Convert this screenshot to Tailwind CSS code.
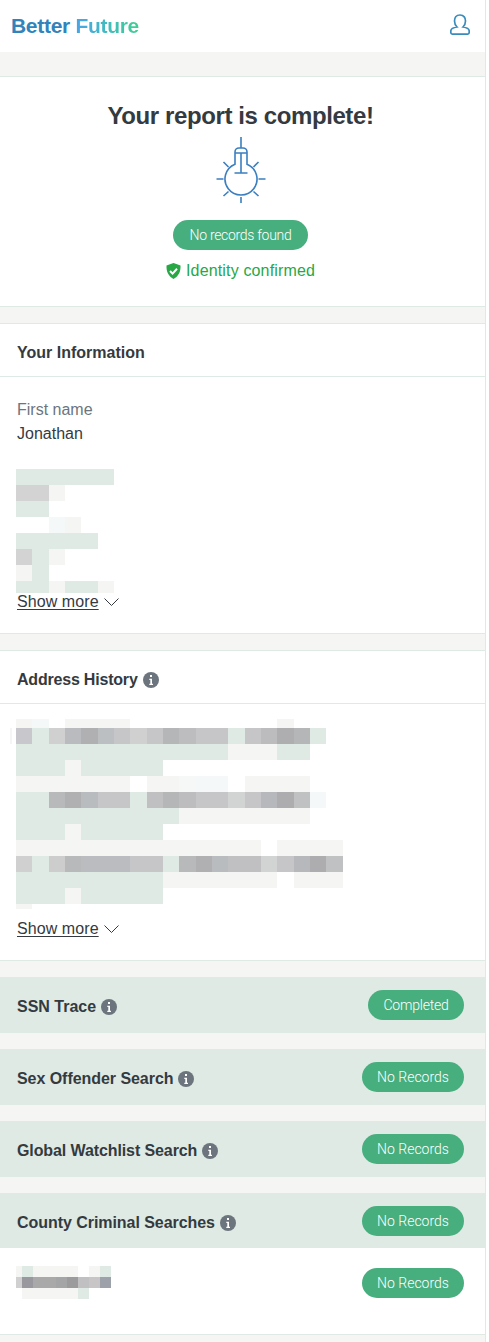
<!doctype html>
<html><head><meta charset="utf-8"><script src="https://cdn.jsdelivr.net/npm/@tailwindcss/browser@4"></script></head>
<body class="bg-white">
<div class="w-[486px] h-[1342px] overflow-hidden border-r border-[#deeae3] bg-[#f5f5f3] font-['Liberation_Sans',Arial,sans-serif] text-[#343a40]">
<header class="h-[52px] bg-white flex items-center justify-between pl-[11px] pr-[15px]">
<div class="-mt-[2px] text-[21px] font-bold tracking-[-0.3px] leading-none"><span class="text-[#3184bb]">Better </span><span class="bg-linear-to-r from-[#4aa3e8] to-[#3fcf8e] bg-clip-text text-transparent">Future</span></div>
<svg class="-mt-[4px] w-[20px] h-[21px] text-[#3a8bbb]" viewBox="0 0 20 21" fill="none" stroke="currentColor" stroke-width="1.7"><path d="M10 1C6 1 4.500 4 4.500 7C4.500 10 6 12 7 13C4 13.500 .8 14 .8 17v1.500C.8 20 2 20.200 3 20.200h14C18 20.200 19.200 20 19.200 18.500V17C19.200 14 16 13.500 13 13C14 12 15.500 10 15.500 7C15.500 4 14 1 10 1z"/></svg>
</header>
<section class="mt-6 h-[231px] pr-[4px] bg-white border-y border-[#deeae3] flex flex-col items-center">
<h1 class="mt-[24px] text-[24px] leading-[30px] font-bold tracking-[-0.4px]">Your report is complete!</h1>
<svg class="mt-[5px] w-[50px] h-[68px] text-[#3b7fc0]" viewBox="0 0 50 68" fill="none" stroke="currentColor" stroke-width="1.6"><path d="M25 1v11M19 28.200A16 16 0 1 0 31 28.200V16a4 4 0 0 0-4-4h-4a4 4 0 0 0-4 4zM19 17h12M25 17v20M18.500 37h13M.5 43h7M42.500 43h7M25 61v6M7.500 26l5 5M42.500 26l-5 5M7.500 60l5-4.500M42.500 60l-5-4.500"/></svg>
<div class="mt-[16px] w-[135px] h-[30px] rounded-full bg-[#47ae7e] text-white text-[14px] flex items-center justify-center font-['Roboto'] font-light tracking-[-0.3px]">No records found</div>
<div class="mt-[10px] flex items-center gap-[5px] text-[#28a745] text-[16px] leading-[22px] tracking-[0.15px]"><svg class="w-[15px] h-[16px]" viewBox="0 0 15 16"><path fill="currentColor" d="M7.500 0 14.500 2.500c.3 5.500-1.500 10.500-7 13.500C2 13 .2 8 .500 2.500z"/><path fill="none" stroke="#fff" stroke-width="2" d="M4 8l2.600 2.600L11 5.800"/></svg>Identity confirmed</div>
</section>
<section class="mt-[16px] h-[311px] bg-white border-y border-[#deeae3]">
<h2 class="h-[53px] pt-[6px] border-b border-[#deeae3] px-[17px] flex items-center text-[16px] font-bold">Your Information</h2>
<div class="pt-[21px] px-[17px] text-[16px] leading-[24px]"><div class="text-[#6c757d]">First name</div><div>Jonathan</div></div>
<div class="mt-[23px] ml-[16px] h-[124px] overflow-hidden">
<div class="grid grid-cols-[repeat(20,16.33px)] auto-rows-[16px]">
<div class="col-span-6 bg-[#deeae3]"></div><div class="col-span-14"></div>
<div class="col-span-2 bg-[#d3d3d3]"></div><div class="bg-[#f5f5f3]"></div><div class="col-span-17"></div>
<div class="col-span-2 bg-[#deeae3]"></div><div class="col-span-18"></div>
<div class="col-span-2"></div><div class="bg-[#f5f8f9]"></div><div class="bg-[#f5f5f3]"></div><div class="col-span-16"></div>
<div class="col-span-5 bg-[#deeae3]"></div><div class="col-span-15"></div>
<div class="bg-[#d3d3d3]"></div><div class="bg-[#deeae3]"></div><div class="bg-[#f5f5f3]"></div><div class="col-span-17"></div>
<div class="bg-[#f5f5f3]"></div><div class="bg-[#deeae3]"></div><div class="col-span-18"></div>
<div class="col-span-2 bg-[#deeae3]"></div><div class="bg-[#f5f5f3]"></div><div class="col-span-2 bg-[#deeae3]"></div><div class="bg-[#f5f5f3]"></div><div class="col-span-14"></div>
</div></div>
<div class="-mt-[1px] px-[17px] flex items-center gap-[5px] text-[16px] leading-[20px] tracking-[0.08px]"><span class="underline underline-offset-2">Show more</span><svg class="w-[15px] h-[8px] text-[#343a40]" viewBox="0 0 15 8" fill="none" stroke="currentColor"><path d="M.5.500l7 7 7-7"/></svg></div>
</section>
<section class="relative mt-[16px] h-[311px] bg-white border-y border-[#deeae3]">
<div class="absolute left-[10px] top-[77px] w-[2px] h-[16px] bg-[#f5f5f3]"></div>
<h2 class="h-[53px] pt-[6px] border-b border-[#deeae3] px-[17px] flex items-center gap-[5px] text-[16px] font-bold tracking-[-0.2px]">Address History <svg class="w-[16px] h-[16px]" viewBox="0 0 16 16"><circle cx="8" cy="8" r="8" fill="#6c757d"/><path fill="#fff" d="M7 3h2v2H7zM6.300 6.700h2.700v5h1v1.300H6.300v-1.300h1V8H6.300z"/></svg></h2>
<div class="mt-[15px] ml-[16px] h-[191px] overflow-hidden">
<div class="grid grid-cols-[repeat(20,16.33px)] grid-rows-[9px_repeat(11,16px)_5px]">
<div class="bg-[#f5f5f3]"></div><div class="bg-[#f5f8f9]"></div><div></div><div class="col-span-4 bg-[#f5f5f3]"></div><div class="col-span-9"></div><div class="bg-[#f5f5f3]"></div><div class="col-span-3"></div>
<div class="bg-[#c8c8cc]"></div><div class="bg-[#deeae3]"></div><div class="bg-[#d0d0d0]"></div><div class="bg-[#b9bbbe]"></div><div class="bg-[#b0b0b2]"></div><div class="bg-[#bbbfc2]"></div><div class="bg-[#c6c6c9]"></div><div class="bg-[#d0d0d0]"></div><div class="bg-[#c6c6c9]"></div><div class="bg-[#b5b6b8]"></div><div class="bg-[#bdbdc0]"></div><div class="col-span-2 bg-[#c6c6c9]"></div><div class="bg-[#deeae3]"></div><div class="bg-[#c6c6c9]"></div><div class="bg-[#bcbcbf]"></div><div class="bg-[#aeaeb0]"></div><div class="bg-[#b5b6b8]"></div><div class="bg-[#deeae3]"></div><div></div>
<div class="col-span-13 bg-[#deeae3]"></div><div class="col-span-3 bg-[#f5f5f3]"></div><div class="col-span-2 bg-[#deeae3]"></div><div class="col-span-2"></div>
<div class="col-span-3 bg-[#deeae3]"></div><div class="bg-[#f5f5f3]"></div><div class="col-span-5 bg-[#deeae3]"></div><div class="col-span-11"></div>
<div class="col-span-7 bg-[#f5f5f3]"></div><div></div><div class="col-span-2 bg-[#f5f5f3]"></div><div class="bg-[#f6f7f7]"></div><div class="col-span-2 bg-[#f5f8f9]"></div><div></div><div class="col-span-4 bg-[#f5f5f3]"></div><div class="col-span-2"></div>
<div class="col-span-2 bg-[#deeae3]"></div><div class="bg-[#b8b9bb]"></div><div class="bg-[#b0b0b2]"></div><div class="bg-[#b8bcbf]"></div><div class="col-span-2 bg-[#c6c6c9]"></div><div class="bg-[#deeae3]"></div><div class="bg-[#c0c0c3]"></div><div class="bg-[#b5b6b8]"></div><div class="bg-[#bdbdc0]"></div><div class="col-span-2 bg-[#c6c6c9]"></div><div class="bg-[#d2d4d3]"></div><div class="bg-[#c6c6c9]"></div><div class="bg-[#b7b8bc]"></div><div class="bg-[#adadaf]"></div><div class="bg-[#c0c1c3]"></div><div class="bg-[#f5f8f9]"></div><div></div>
<div class="col-span-10 bg-[#deeae3]"></div><div class="col-span-8 bg-[#f5f5f3]"></div><div class="col-span-2"></div>
<div class="col-span-3 bg-[#deeae3]"></div><div class="bg-[#f5f5f3]"></div><div class="col-span-5 bg-[#deeae3]"></div><div class="col-span-11"></div>
<div class="col-span-15 bg-[#f5f5f3]"></div><div></div><div class="col-span-4 bg-[#f5f5f3]"></div>
<div class="bg-[#d0d0d0]"></div><div class="bg-[#deeae3]"></div><div class="bg-[#cdcdcd]"></div><div class="bg-[#b8b9bb]"></div><div class="col-span-3 bg-[#bbbcbf]"></div><div class="col-span-2 bg-[#c6c6c9]"></div><div class="bg-[#deeae3]"></div><div class="bg-[#b8b9bb]"></div><div class="bg-[#b0b0b2]"></div><div class="bg-[#b8bcbf]"></div><div class="col-span-2 bg-[#c0c0c3]"></div><div class="bg-[#d2d4d3]"></div><div class="bg-[#c6c6c9]"></div><div class="bg-[#b7b8bc]"></div><div class="bg-[#adadaf]"></div><div class="bg-[#c0c1c3]"></div>
<div class="col-span-9 bg-[#deeae3]"></div><div class="col-span-7 bg-[#f5f5f3]"></div><div></div><div class="col-span-3 bg-[#f5f5f3]"></div>
<div class="col-span-3 bg-[#deeae3]"></div><div class="bg-[#f5f5f3]"></div><div class="col-span-5 bg-[#deeae3]"></div><div class="col-span-11"></div>
<div class="bg-[#f5f5f3]"></div><div class="col-span-19"></div>
</div></div>
<div class="mt-[9px] px-[17px] flex items-center gap-[5px] text-[16px] leading-[20px] tracking-[0.08px]"><span class="underline underline-offset-2">Show more</span><svg class="w-[15px] h-[8px] text-[#343a40]" viewBox="0 0 15 8" fill="none" stroke="currentColor"><path d="M.5.500l7 7 7-7"/></svg></div>
</section>
<section class="mt-[16px] h-[56px] bg-[#deeae3] pl-[17px] pr-[21px] flex items-center justify-between"><h3 class="pt-[4px] flex items-center gap-[5px] text-[16px] font-bold">SSN Trace <svg class="w-[16px] h-[16px]" viewBox="0 0 16 16"><circle cx="8" cy="8" r="8" fill="#6c757d"/><path fill="#fff" d="M7 3h2v2H7zM6.300 6.700h2.700v5h1v1.300H6.300v-1.300h1V8H6.300z"/></svg></h3><div class="w-[96px] h-[30px] rounded-full bg-[#47ae7e] text-white text-[14px] flex items-center justify-center font-['Roboto'] font-light tracking-[-0.2px]">Completed</div></section>
<section class="mt-[16px] h-[56px] bg-[#deeae3] pl-[17px] pr-[21px] flex items-center justify-between"><h3 class="pt-[4px] flex items-center gap-[5px] text-[16px] font-bold tracking-[-0.05px]">Sex Offender Search <svg class="w-[16px] h-[16px]" viewBox="0 0 16 16"><circle cx="8" cy="8" r="8" fill="#6c757d"/><path fill="#fff" d="M7 3h2v2H7zM6.300 6.700h2.700v5h1v1.300H6.300v-1.300h1V8H6.300z"/></svg></h3><div class="w-[102px] h-[30px] rounded-full bg-[#47ae7e] text-white text-[14px] flex items-center justify-center font-['Roboto'] font-light">No Records</div></section>
<section class="mt-[16px] h-[56px] bg-[#deeae3] pl-[17px] pr-[21px] flex items-center justify-between"><h3 class="pt-[4px] flex items-center gap-[5px] text-[16px] font-bold tracking-[-0.1px]">Global Watchlist Search <svg class="w-[16px] h-[16px]" viewBox="0 0 16 16"><circle cx="8" cy="8" r="8" fill="#6c757d"/><path fill="#fff" d="M7 3h2v2H7zM6.300 6.700h2.700v5h1v1.300H6.300v-1.300h1V8H6.300z"/></svg></h3><div class="w-[102px] h-[30px] rounded-full bg-[#47ae7e] text-white text-[14px] flex items-center justify-center font-['Roboto'] font-light">No Records</div></section>
<section class="mt-[16px] bg-white border-b border-[#deeae3]">
<div class="h-[55px] bg-[#deeae3] pl-[17px] pr-[21px] flex items-center justify-between"><h3 class="pt-[4px] flex items-center gap-[5px] text-[16px] font-bold tracking-[-0.05px]">County Criminal Searches <svg class="w-[16px] h-[16px]" viewBox="0 0 16 16"><circle cx="8" cy="8" r="8" fill="#6c757d"/><path fill="#fff" d="M7 3h2v2H7zM6.300 6.700h2.700v5h1v1.300H6.300v-1.300h1V8H6.300z"/></svg></h3><div class="mt-[1px] w-[102px] h-[30px] rounded-full bg-[#47ae7e] text-white text-[14px] flex items-center justify-center font-['Roboto'] font-light">No Records</div></div>
<div class="h-[86px] pl-[16px] pr-[21px] pt-[18px] flex items-start justify-between">
<div class="grid grid-cols-[6px_11px_23px_11px_11px_11px_11px_11px] auto-rows-[11px] w-[95px]">
<div class="bg-[#f5f5f3]"></div><div class="bg-[#deeae3]"></div><div class="col-span-3 bg-[#f5f5f3]"></div><div></div><div class="bg-[#f5f5f3]"></div><div class="bg-[#deeae3]"></div>
<div class="bg-[#d0d0d0]"></div><div class="bg-[#98989e]"></div><div class="bg-[#a9a9a9]"></div><div class="bg-[#a3a5a7]"></div><div class="bg-[#9b9b9d]"></div><div class="bg-[#c0c0c3]"></div><div class="bg-[#c8c5c7]"></div><div class="bg-[#9da2aa]"></div>
<div></div><div class="col-span-4 bg-[#f5f5f3]"></div><div class="bg-[#deeae3]"></div><div class="col-span-2"></div>
</div>
<div class="mt-[2px] w-[102px] h-[30px] rounded-full bg-[#47ae7e] text-white text-[14px] flex items-center justify-center font-['Roboto'] font-light">No Records</div>
</div></section>
</div>
</body></html>
